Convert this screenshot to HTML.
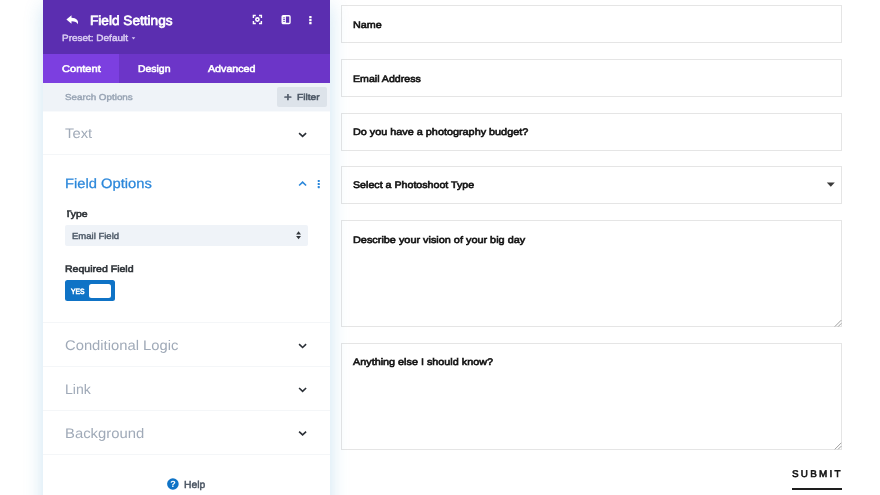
<!DOCTYPE html>
<html><head><meta charset="utf-8"><title>Field Settings</title>
<style>
*{box-sizing:border-box;margin:0;padding:0}
html,body{width:880px;height:495px;overflow:hidden;background:#fff}
body{font-family:"Liberation Sans","DejaVu Sans",sans-serif;position:relative;color:#1e1e1e;text-rendering:geometricPrecision}
.abs{position:absolute}
.t{position:absolute;white-space:nowrap;line-height:1;transform-origin:0 0}
#panel{position:absolute;left:43px;top:0;width:287px;height:530px;background:#fff;box-shadow:0 6px 18px rgba(40,140,200,.23)}
.div{position:absolute;left:43px;width:287px;height:1px;background:#f4f6f8}
.f{position:absolute;left:340.5px;width:501.5px;border:1px solid #e5e5e5}
#ico{position:absolute;left:0;top:0;pointer-events:none}
</style></head><body>

<div class="f" style="top:5.4px;height:38px"></div>
<div class="f" style="top:59.1px;height:38px"></div>
<div class="f" style="top:112.8px;height:38px"></div>
<div class="f" style="top:166.3px;height:38px"></div>
<div class="f" style="top:219.8px;height:107.5px"></div>
<div class="f" style="top:342.8px;height:107.2px"></div>
<div id="panel"></div>
<div class="abs" style="left:43px;top:0;width:287px;height:54px;background:#5b2eb0"></div>
<div class="abs" style="left:43px;top:53.6px;width:287px;height:29px;background:#6c35c8"></div>
<div class="abs" style="left:43px;top:53.6px;width:76px;height:29px;background:#7c3fe0"></div>
<div class="abs" style="left:43px;top:83px;width:287px;height:28px;background:#eff3f8"></div>
<div class="abs" style="left:43px;top:111px;width:287px;height:1px;background:#f8fafc"></div>
<div class="abs" style="left:277px;top:87px;width:50px;height:20.3px;background:#dde3ea;border-radius:2px"></div>

<div class="div" style="top:154.4px"></div>
<div class="abs" style="left:64.6px;top:225px;width:243.8px;height:21px;background:#eff3f8;border-radius:2px"></div>
<div class="abs" style="left:64.6px;top:280.3px;width:50px;height:20.9px;background:#0f73c6;border-radius:2.5px"></div>
<div class="abs" style="left:89.4px;top:283.8px;width:21.7px;height:14px;background:#fff;border-radius:2.5px"></div>
<div class="div" style="top:322.3px"></div>
<div class="div" style="top:366.1px"></div>
<div class="div" style="top:410.1px"></div>
<div class="div" style="top:453.7px"></div>

<div class="abs" style="left:792px;top:488.4px;width:50px;height:2px;background:#1e1e1e"></div>

<div id="tx" style="position:absolute;left:0;top:0;width:880px;height:495px;will-change:transform">
<div class="t" style="left:90.10px;top:13.79px;font-size:13.41px;color:#fff;-webkit-text-stroke:0.7px #fff;transform:scaleX(1.016)">Field Settings</div>
<div class="t" style="left:61.80px;top:33.55px;font-size:9.15px;color:#d9ccf2;-webkit-text-stroke:0.45px #d9ccf2;transform:scaleX(1.093)">Preset: Default</div>
<div class="t" style="left:61.75px;top:65.36px;font-size:9.71px;color:#fff;-webkit-text-stroke:0.55px #fff;transform:scaleX(1.140)">Content</div>
<div class="t" style="left:138.00px;top:65.14px;font-size:9.71px;color:#fff;-webkit-text-stroke:0.55px #fff;transform:scaleX(1.075)">Design</div>
<div class="t" style="left:208.00px;top:65.24px;font-size:9.71px;color:#fff;-webkit-text-stroke:0.55px #fff;transform:scaleX(1.100)">Advanced</div>
<div class="t" style="left:64.75px;top:93.12px;font-size:8.52px;color:#98a4b4;-webkit-text-stroke:0.4px #98a4b4;transform:scaleX(1.154)">Search Options</div>
<div class="t" style="left:284.20px;top:92.35px;font-size:11.87px;color:#4a5563;-webkit-text-stroke:0.5px #4a5563;transform:scaleX(1.124)">+</div>
<div class="t" style="left:296.80px;top:93.07px;font-size:8.66px;color:#4a5563;-webkit-text-stroke:0.5px #4a5563;transform:scaleX(1.174)">Filter</div>
<div class="t" style="left:64.70px;top:126.97px;font-size:13.97px;color:#a0aab8;transform:scaleX(1.061)">Text</div>
<div class="t" style="left:64.70px;top:177.20px;font-size:13.62px;color:#2b87da;-webkit-text-stroke:0.25px #2b87da;transform:scaleX(1.082)">Field Options</div>
<div class="t" style="left:64.60px;top:209.44px;font-size:9.43px;color:#2e3338;-webkit-text-stroke:0.55px #2e3338;transform:scaleX(1.106)">Type</div>
<div class="t" style="left:72.30px;top:232.07px;font-size:8.8px;color:#4c5866;-webkit-text-stroke:0.4px #4c5866;transform:scaleX(1.082)">Email Field</div>
<div class="t" style="left:64.60px;top:264.14px;font-size:9.43px;color:#2e3338;-webkit-text-stroke:0.55px #2e3338;transform:scaleX(1.119)">Required Field</div>
<div class="t" style="left:71.00px;top:287.76px;font-size:7.61px;color:#fff;-webkit-text-stroke:0.55px #fff;transform:scaleX(0.893)">YES</div>
<div class="t" style="left:64.70px;top:339.37px;font-size:13.97px;color:#a0aab8;transform:scaleX(1.058)">Conditional Logic</div>
<div class="t" style="left:64.70px;top:383.17px;font-size:13.97px;color:#a0aab8;transform:scaleX(1.006)">Link</div>
<div class="t" style="left:64.60px;top:426.57px;font-size:13.97px;color:#a0aab8;transform:scaleX(1.062)">Background</div>
<div class="t" style="left:184.00px;top:481.01px;font-size:10.13px;color:#4a5562;-webkit-text-stroke:0.45px #4a5562;transform:scaleX(1.023)">Help</div>
<div class="t" style="left:353.00px;top:21.33px;font-size:9.5px;color:#151515;-webkit-text-stroke:0.6px #151515;transform:scaleX(1.132)">Name</div>
<div class="t" style="left:353.00px;top:75.44px;font-size:9.5px;color:#151515;-webkit-text-stroke:0.6px #151515;transform:scaleX(1.116)">Email Address</div>
<div class="t" style="left:352.70px;top:127.95px;font-size:9.5px;color:#151515;-webkit-text-stroke:0.6px #151515;transform:scaleX(1.140)">Do you have a photography budget?</div>
<div class="t" style="left:352.70px;top:181.16px;font-size:9.5px;color:#151515;-webkit-text-stroke:0.6px #151515;transform:scaleX(1.121)">Select a Photoshoot Type</div>
<div class="t" style="left:352.70px;top:236.30px;font-size:9.5px;color:#151515;-webkit-text-stroke:0.6px #151515;transform:scaleX(1.144)">Describe your vision of your big day</div>
<div class="t" style="left:352.50px;top:357.98px;font-size:9.5px;color:#151515;-webkit-text-stroke:0.6px #151515;transform:scaleX(1.138)">Anything else I should know?</div>
<div class="t" style="left:792.00px;top:469.62px;font-size:9.64px;letter-spacing:2.2px;color:#151515;-webkit-text-stroke:0.6px #151515;transform:scaleX(1.024)">SUBMIT</div>
</div>
<div class="abs" style="left:64px;top:209.4px;width:2.6px;height:2.6px;background:#fff"></div>
<svg id="ico" width="880" height="495" viewBox="0 0 880 495">
<path transform="translate(66.4 15.3)" d="M5.1 0 L0 4.2 L5.1 8.4 V6 C8.6 6 10.4 6.7 11.3 9 C12.7 5.4 10 2.5 5.1 2.4 Z" fill="#fff"/>
<path d="M131.7 37.3h3.6l-1.8 2.2z" fill="#d9ccf2"/>
<g transform="translate(252.7 14.8)" fill="none" stroke="#fff" stroke-width="1.4"><path d="M0.7 3.1V0.7H3.1M6.3 0.7H8.7V3.1M8.7 6.3V8.7H6.3M3.1 8.7H0.7V6.3"/><circle cx="4.7" cy="4.7" r="1.6" stroke-width="1.6"/></g>
<g transform="translate(281.5 15)"><rect x="0.7" y="0.7" width="7.8" height="7.8" rx="1" fill="none" stroke="#fff" stroke-width="1.4"/><rect x="0.9" y="0.9" width="3.5" height="7.4" fill="#fff"/><rect x="1.6" y="2.5" width="1.9" height="0.8" fill="#5b2eb0"/><rect x="1.6" y="4.2" width="1.9" height="0.8" fill="#5b2eb0"/><rect x="1.6" y="5.9" width="1.9" height="0.8" fill="#5b2eb0"/></g>
<rect x="309.2" y="15.90" width="2.4" height="2.4" rx=".4" fill="#fff"/><rect x="309.2" y="18.90" width="2.4" height="2.4" rx=".4" fill="#fff"/><rect x="309.2" y="21.90" width="2.4" height="2.4" rx=".4" fill="#fff"/>
<path d="M299.10 133.10L302.60 136.40L306.10 133.10" fill="none" stroke="#2a2f36" stroke-width="1.6"/>
<path d="M299.10 185.50L302.60 182.20L306.10 185.50" fill="none" stroke="#2b87da" stroke-width="1.6"/>
<rect x="317.7" y="179.90" width="2.1" height="2.1" rx=".4" fill="#2b87da"/><rect x="317.7" y="183.00" width="2.1" height="2.1" rx=".4" fill="#2b87da"/><rect x="317.7" y="186.10" width="2.1" height="2.1" rx=".4" fill="#2b87da"/>
<path d="M296.1 234.6L298.55 231.3L301 234.6ZM296.1 236L298.55 239.3L301 236Z" fill="#32373c"/>
<path d="M299.10 344.20L302.60 347.50L306.10 344.20" fill="none" stroke="#2a2f36" stroke-width="1.6"/>
<path d="M299.10 388.00L302.60 391.30L306.10 388.00" fill="none" stroke="#2a2f36" stroke-width="1.6"/>
<path d="M299.10 431.60L302.60 434.90L306.10 431.60" fill="none" stroke="#2a2f36" stroke-width="1.6"/>
<circle cx="172.9" cy="484" r="5.8" fill="#0f73c6"/>
<text x="172.9" y="487.3" text-anchor="middle" font-family="Liberation Sans, sans-serif" font-weight="700" font-size="9" fill="#fff">?</text>
<path d="M826.8 182.4h8l-4 4.4z" fill="#3a3a3a"/>
<path d="M834.8 326.6L841.3 320.1M838.0999999999999 326.6L841.3 323.40000000000003" stroke="#858585" stroke-width="0.8" fill="none"/>
<path d="M834.8 449.3L841.3 442.8M838.0999999999999 449.3L841.3 446.1" stroke="#858585" stroke-width="0.8" fill="none"/>
</svg>
</body></html>
